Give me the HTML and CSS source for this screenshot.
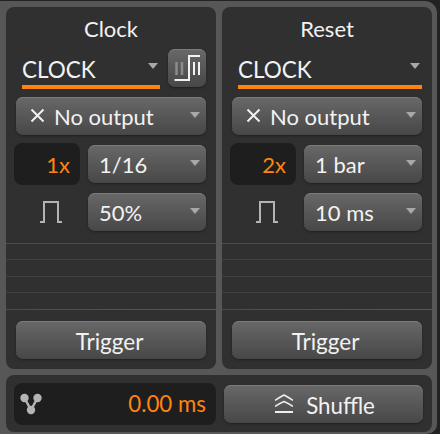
FILE: index.html
```html
<!DOCTYPE html>
<html lang="en">
<head>
    <meta charset="UTF-8">
    <title>Clock</title>
    <link rel="stylesheet" href="styles.css">
</head>
<body>
    <div class="window">
        <div class="columns">
            <section class="panel">
                <h2 class="title">Clock</h2>
                <div class="source-row">
                    <div class="source source-short">
                        <span>CLOCK</span>
                        <i class="arrow"></i>
                    </div>
                    <button class="btn btn-square">
                        <svg width="28" height="28" viewBox="0 0 28 28">
                            <path d="M3.500 8v13M9 8v13" stroke="#8c8c8c" stroke-width="2.500" fill="none"/>
                            <path d="M1.500 26H16V2H27" stroke="#f2f2f2" stroke-width="2" fill="none"/>
                            <path d="M21 8v13M26 8v13" stroke="#f2f2f2" stroke-width="2" fill="none"/>
                        </svg>
                    </button>
                </div>
                <button class="btn btn-select btn-output">
                    <svg class="cross" width="15" height="15" viewBox="0 0 15 15">
                        <path d="M1.500 1.500l12 12M13.500 1.500l-12 12" stroke="#f0f0f0" stroke-width="2" fill="none"/>
                    </svg>
                    <span>No output</span>
                    <i class="arrow"></i>
                </button>
                <div class="value-row">
                    <div class="display">1x</div>
                    <button class="btn btn-select"><span>1/16</span><i class="arrow"></i></button>
                </div>
                <div class="value-row">
                    <div class="pulse">
                        <svg width="22" height="22" viewBox="0 0 22 22">
                            <path d="M0 21h4V1h14v20h4" stroke="#b4b4b4" stroke-width="2" fill="none"/>
                        </svg>
                    </div>
                    <button class="btn btn-select"><span>50%</span><i class="arrow"></i></button>
                </div>
                <div class="graph"></div>
                <button class="btn btn-trigger">Trigger</button>
            </section>

            <section class="panel">
                <h2 class="title">Reset</h2>
                <div class="source-row">
                    <div class="source">
                        <span>CLOCK</span>
                        <i class="arrow"></i>
                    </div>
                </div>
                <button class="btn btn-select btn-output">
                    <svg class="cross" width="15" height="15" viewBox="0 0 15 15">
                        <path d="M1.500 1.500l12 12M13.500 1.500l-12 12" stroke="#f0f0f0" stroke-width="2" fill="none"/>
                    </svg>
                    <span>No output</span>
                    <i class="arrow"></i>
                </button>
                <div class="value-row">
                    <div class="display">2x</div>
                    <button class="btn btn-select"><span>1 bar</span><i class="arrow"></i></button>
                </div>
                <div class="value-row">
                    <div class="pulse">
                        <svg width="22" height="22" viewBox="0 0 22 22">
                            <path d="M0 21h4V1h14v20h4" stroke="#b4b4b4" stroke-width="2" fill="none"/>
                        </svg>
                    </div>
                    <button class="btn btn-select"><span>10 ms</span><i class="arrow"></i></button>
                </div>
                <div class="graph"></div>
                <button class="btn btn-trigger">Trigger</button>
            </section>
        </div>

        <footer class="footer">
            <div class="display display-wide">
                <svg width="22" height="22" viewBox="0 0 22 22">
                    <path d="M4.500 5l6.500 12M17.500 5L11 17" stroke="#b4b4b4" stroke-width="2.500" fill="none"/>
                    <circle cx="4.500" cy="5" r="4.200" fill="#b4b4b4"/>
                    <circle cx="17.500" cy="5" r="4.200" fill="#b4b4b4"/>
                    <circle cx="11" cy="17" r="4.200" fill="#b4b4b4"/>
                </svg>
                <span>0.00 ms</span>
            </div>
            <button class="btn btn-shuffle">
                <svg width="18" height="20" viewBox="0 0 18 20">
                    <path d="M0 6.500Q5 3 9 1q4 2 9 5.500M0 12.500Q5 9 9 7.500q4 1.500 9 5" stroke="#f0f0f0" stroke-width="1.500" fill="none"/>
                    <path d="M0 18h18" stroke="#f0f0f0" stroke-width="2" fill="none"/>
                </svg>
                <span>Shuffle</span>
            </button>
        </footer>
    </div>
</body>
</html>
```

FILE: styles.css
```css
html, body {
    margin: 0;
    padding: 0;
    background-color: #222;
    overflow: hidden;
}
body {
    width: 440px;
    height: 434px;
    font-family: Lato, sans-serif;
    color: #f2f2f2;
}
button {
    font-family: inherit;
    color: inherit;
    padding: 0;
}
.window {
    box-sizing: border-box;
    width: 437px;
    height: 433px;
    margin-top: 1px;
    padding: 6px 5px 0 6px;
    background-color: #575757;
    border-radius: 0 12px 10px 0;
}
.columns {
    display: flex;
    gap: 6px;
}
.panel {
    box-sizing: border-box;
    width: 210px;
    height: 362px;
    background-color: #303030;
    border-radius: 8px;
    display: flex;
    flex-direction: column;
    padding: 0 10px;
}
.title {
    margin: 0;
    height: 42px;
    line-height: 44px;
    font-size: 22px;
    font-weight: 400;
    text-align: center;
}
.source-row {
    display: flex;
    justify-content: space-between;
    height: 38px;
}
.source {
    box-sizing: border-box;
    flex: 1;
    height: 40px;
    margin: 0 0 0 6px;
    border-bottom: 4px solid #ff8410;
    display: flex;
    justify-content: space-between;
    align-items: center;
    font-size: 22.500px;
    padding-top: 4px;
}
.source-short {
    flex: none;
    width: 138px;
}
.source .arrow {
    margin: 0 2px 6px 0;
}
.arrow {
    width: 0;
    height: 0;
    border-left: 5px solid transparent;
    border-right: 5px solid transparent;
    border-top: 6px solid #a8a8a8;
    flex: none;
}
.btn {
    box-sizing: border-box;
    height: 38px;
    border: 0;
    border-radius: 7px;
    background: linear-gradient(#686868, #474747);
    box-shadow: 0 1px 2px #1e1e1e, inset 0 1px 0 #7c7c7c;
    font-size: 22px;
}
.btn-square {
    width: 38px;
    display: flex;
    align-items: center;
    justify-content: center;
}
.btn-select {
    display: flex;
    align-items: center;
    padding: 0 6px 0 11px;
    flex: 1;
}
.btn-select span {
    flex: 1;
    text-align: left;
}
.btn-select .arrow {
    margin-bottom: 3px;
}
.btn-output {
    flex: none;
    width: 190px;
    margin-top: 10px;
}
.cross {
    margin: 0 9px 2px 3px;
}
.value-row {
    display: flex;
    align-items: center;
    gap: 8px;
    height: 42px;
    margin: 8px 0 0 -2px;
}
.value-row + .value-row {
    margin: 6px 0 0 0;
    gap: 10px;
}
.display {
    box-sizing: border-box;
    width: 66px;
    height: 42px;
    background-color: #1e1e1e;
    border-radius: 8px;
    color: #ff8410;
    font-size: 22px;
    line-height: 44px;
    text-align: right;
    padding-right: 10px;
}
.pulse {
    width: 62px;
    display: flex;
    justify-content: center;
    padding-left: 8px;
    box-sizing: border-box;
}
.graph {
    height: 66px;
    flex: none;
    margin: 10px -10px 0 -10px;
    border-top: 1px solid #4a4a4a;
    background: linear-gradient(#404040, #404040) 0 15px / 100% 1px no-repeat,
                linear-gradient(#404040, #404040) 0 32px / 100% 1px no-repeat,
                linear-gradient(#404040, #404040) 0 48px / 100% 1px no-repeat,
                linear-gradient(90deg, #7a3442, #b82a48) 0 100% / 100% 1px no-repeat;
}
.btn-trigger {
    margin-top: 11px;
    width: 190px;
    padding: 2px 3px 0 0;
    font-size: 22.500px;
    flex: none;
}
.footer {
    box-sizing: border-box;
    width: 426px;
    height: 57px;
    margin-top: 6px;
    padding: 8px 9px 0 8px;
    background-color: #303030;
    border-radius: 8px;
    display: flex;
    gap: 8px;
}
.display-wide {
    width: 202px;
    display: flex;
    align-items: center;
    justify-content: space-between;
    padding: 0 10px 0 6px;
    font-size: 22.300px;
}
.btn-shuffle {
    flex: 1;
    margin-top: 2px;
    padding-left: 3px;
    display: flex;
    align-items: center;
    justify-content: center;
    gap: 13px;
    font-size: 22.300px;
}
.btn-shuffle span {
    padding-top: 2px;
}
```
